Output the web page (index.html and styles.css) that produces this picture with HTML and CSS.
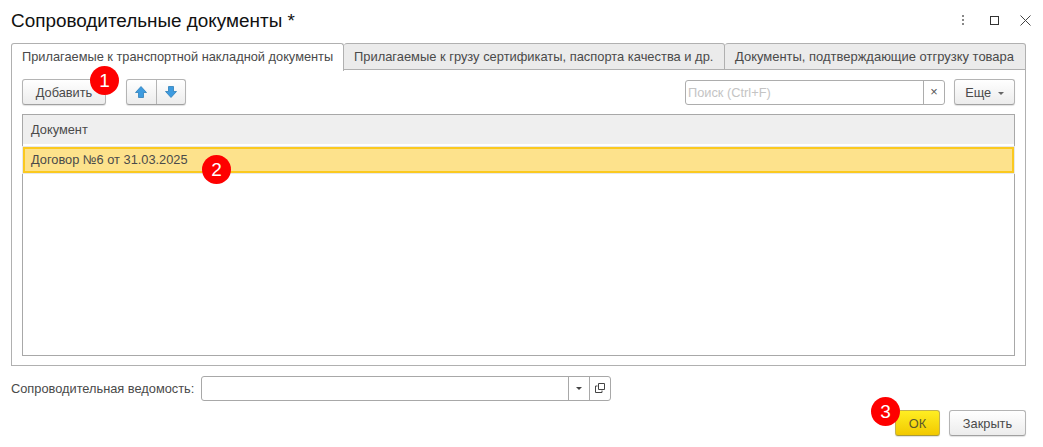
FILE: index.html
```html
<!DOCTYPE html>
<html lang="ru">
<head>
<meta charset="utf-8">
<title>Сопроводительные документы</title>
<link rel="stylesheet" href="styles.css">
</head>
<body>
<div class="window">
  <header class="titlebar">
    <h1 class="title">Сопроводительные документы *</h1>
    <div class="win-icons">
      <svg class="win-icon" width="16" height="16" viewBox="0 0 16 16"><g fill="#888"><rect x="6" y="2" width="2" height="2"/><rect x="6" y="6" width="2" height="2"/><rect x="6" y="10" width="2" height="2"/></g></svg>
      <svg class="win-icon" width="16" height="16" viewBox="0 0 16 16"><rect x="3.5" y="3.5" width="8" height="8" fill="none" stroke="#333"/></svg>
      <svg class="win-icon" width="16" height="16" viewBox="0 0 16 16"><path d="M2.5 2.5l10 10M12.5 2.5l-10 10" fill="none" stroke="#444"/></svg>
    </div>
  </header>

  <nav class="tabs">
    <div class="tab tab-active">Прилагаемые к транспортной накладной документы</div>
    <div class="tab tab-second">Прилагаемые к грузу сертификаты, паспорта качества и др.</div>
    <div class="tab tab-third">Документы, подтверждающие отгрузку товара</div>
  </nav>

  <section class="panel">
    <div class="toolbar">
      <div class="add-wrap">
        <button class="btn btn-add">Добавить</button>
        <span class="badge badge-1">1</span>
      </div>
      <div class="btn-group">
        <button class="btn-part">
          <svg width="14" height="14" viewBox="0 0 14 14"><path d="M7 1.5L12.5 7.5H9.5V12.5H4.5V7.5H1.5Z" fill="#3d9be0" stroke="#2f7fb8" stroke-width=".8"/></svg>
        </button>
        <button class="btn-part">
          <svg width="14" height="14" viewBox="0 0 14 14"><path d="M7 12.5L12.5 6.5H9.5V1.5H4.5V6.5H1.5Z" fill="#3d9be0" stroke="#2f7fb8" stroke-width=".8"/></svg>
        </button>
      </div>
      <div class="search">
        <span class="search-text">Поиск (Ctrl+F)</span>
        <span class="search-clear">×</span>
      </div>
      <button class="btn btn-more">Еще <i class="caret"></i></button>
    </div>

    <div class="table">
      <div class="table-head">Документ</div>
      <div class="row">
        <span>Договор №6 от 31.03.2025</span>
        <span class="badge badge-2">2</span>
      </div>
    </div>
  </section>

  <div class="field">
    <label class="field-label">Сопроводительная ведомость:</label>
    <div class="field-input">
      <span class="field-text"></span>
      <span class="field-btn"><i class="caret caret-dark"></i></span>
      <span class="field-btn">
        <svg width="10" height="10" viewBox="0 0 10 10"><path d="M3.5 .5h6v6h-6zM2.5 3H.5v6.5H7V7.5" fill="none" stroke="#444"/></svg>
      </span>
    </div>
  </div>

  <footer class="actions">
    <div class="ok-wrap">
      <span class="badge badge-3">3</span>
      <button class="btn btn-ok">ОК</button>
    </div>
    <button class="btn btn-close">Закрыть</button>
  </footer>
</div>
</body>
</html>
```

FILE: styles.css
```css
* { box-sizing: border-box; }
html, body { margin: 0; padding: 0; background: #fff; }
body { font-family: "Liberation Sans", Arial, sans-serif; font-size: 12.8px; color: #4a4a4a; }

.window { width: 1043px; height: 447px; padding: 0 17px 0 11px; overflow: hidden; }

.titlebar { height: 43px; display: flex; align-items: flex-start; justify-content: space-between; }
.title { margin: 10px 0 0; font-size: 18.9px; line-height: 22px; font-weight: 400; color: #111; }
.win-icons { display: flex; gap: 15px; margin: 13px -8px 0 0; }
.win-icon { display: block; }

.tabs { display: flex; height: 27px; }
.tab { height: 27px; padding: 0 10px; line-height: 26px; white-space: nowrap; background: #ebebeb; border: 1px solid #b0b0b0; border-left: 0; color: #4a4a4a; }
.tab-active { width: 333px; background: #fff; border-left: 1px solid #b0b0b0; border-bottom: 0; border-radius: 3px 3px 0 0; height: 28px; position: relative; z-index: 1; }
.tab-second { width: 381px; border-radius: 3px 3px 0 0; font-size: 12.9px; }
.tab-third { width: 301px; border-radius: 3px 3px 0 0; font-size: 12.98px; }

.panel { width: 1015px; height: 296px; border: 1px solid #b0b0b0; border-top: 0; margin-top: 0; padding: 9px 10px 0; }

.toolbar { display: flex; align-items: center; height: 26px; }
.add-wrap { position: relative; }
.btn { height: 26px; padding: 0; font: inherit; color: #4a4a4a; background: linear-gradient(#fff, #ececec); border: 1px solid #b4b4b4; border-bottom-color: #a0a0a0; border-radius: 3px; box-shadow: 0 1px 1px rgba(0,0,0,.12); }
.btn-add { width: 84px; display: block; }
.btn-group { display: flex; margin-left: 20px; width: 60px; height: 26px; border: 1px solid #b4b4b4; border-bottom-color: #a0a0a0; border-radius: 3px; background: linear-gradient(#fff, #ececec); box-shadow: 0 1px 1px rgba(0,0,0,.12); }
.btn-part { flex: 1; padding: 0; border: 0; background: none; display: flex; align-items: center; justify-content: center; }
.btn-part + .btn-part { border-left: 1px solid #b4b4b4; }

.search { margin-left: auto; width: 260px; height: 25px; display: flex; border: 1px solid #adadad; border-radius: 3px; background: #fff; }
.search-text { flex: 1; padding-left: 2px; line-height: 23px; color: #c4c4c4; }
.search-clear { width: 21px; text-align: center; line-height: 21px; border-left: 1px solid #adadad; color: #555; }
.btn-more { width: 61px; margin-left: 9px; }
.caret { display: inline-block; width: 0; height: 0; margin-left: 3px; vertical-align: middle; border: 3px solid transparent; border-top: 3px solid #666; border-bottom: 0; }
.caret-dark { border-top-color: #444; margin: 0; }

.table { margin-top: 9px; height: 242px; width: 993px; border: 1px solid #a8a8a8; }
.table-head { height: 29px; padding-left: 8px; line-height: 29px; background: #efefef; }
.row { position: relative; height: 26px; margin-top: 3px; padding-left: 6px; line-height: 22px; background: #fde28c; border: 2px solid #fbc91f; outline: 1px solid #e8e8e8; }

.badge { position: absolute; width: 29px; height: 29px; border-radius: 50%; background: #fe0000; color: #fff; font-size: 19px; line-height: 29px; text-align: center; z-index: 3; }
.badge-1 { left: 68px; top: -13px; }
.badge-2 { left: 177px; top: 6px; }
.badge-3 { left: -24px; top: -13px; }

.field { display: flex; align-items: center; height: 24px; margin-top: 10px; }
.field-label { width: 190px; white-space: nowrap; }
.field-input { width: 410px; height: 25px; display: flex; border: 1px solid #a8a8a8; border-radius: 3px; background: #fff; }
.field-text { flex: 1; }
.field-btn { width: 21px; display: flex; align-items: center; justify-content: center; border-left: 1px solid #a8a8a8; }

.actions { display: flex; justify-content: flex-end; gap: 9px; margin-top: 10px; width: 1015px; }
.ok-wrap { position: relative; }
.btn-ok { display: block; width: 45px; color: #5c5a2c; background: linear-gradient(#ffee22, #f2c900); border-color: #c3b14f; border-bottom-color: #a99a3a; }
.btn-close { width: 77px; }
```
